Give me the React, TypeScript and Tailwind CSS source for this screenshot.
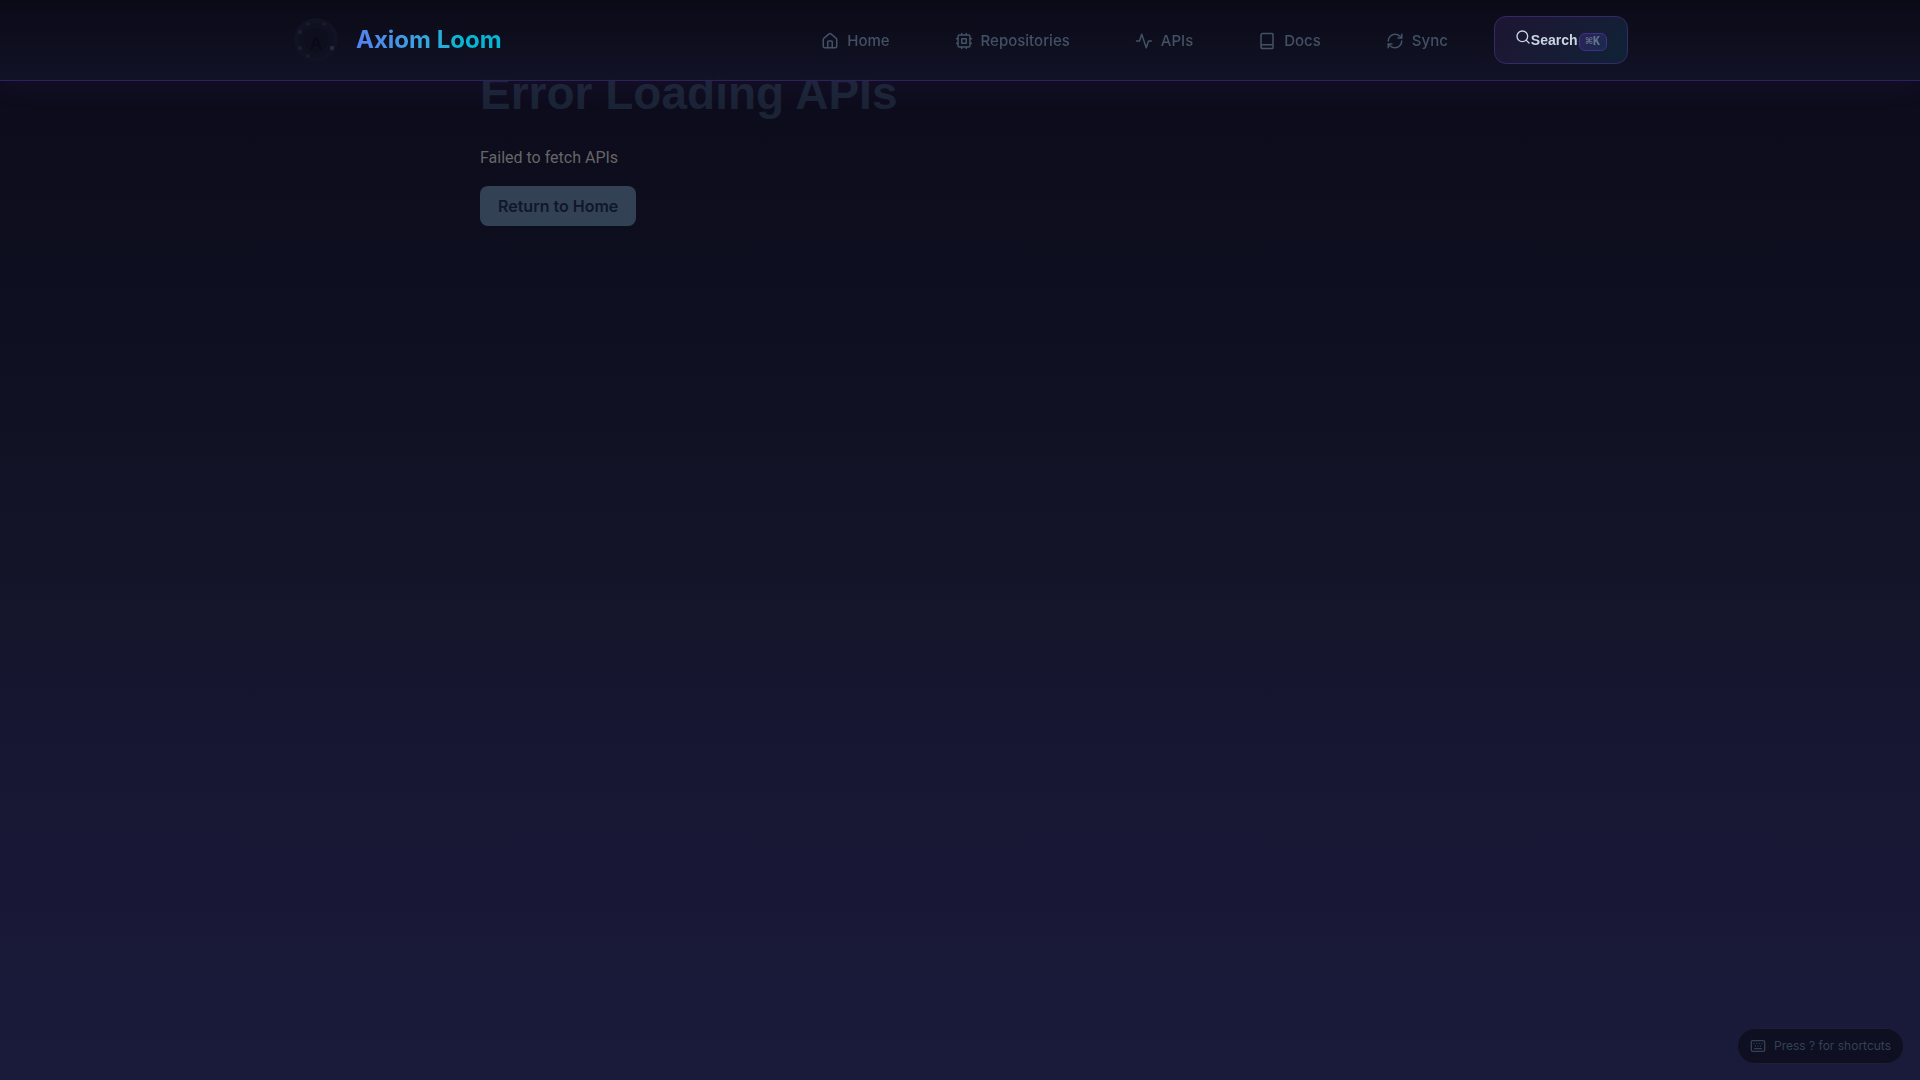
import React from "react";
import { Book, House, Keyboard, RefreshCw, Search } from "lucide-react";

function Cpu({ size }: { size: number }) {
  return (
    <svg width={size} height={size} viewBox="0 0 24 24" fill="none" stroke="currentColor" strokeWidth="2" strokeLinecap="round" strokeLinejoin="round" aria-hidden="true">
      <rect x="4" y="4" width="16" height="16" rx="2" />
      <rect x="9" y="9" width="6" height="6" />
      <path d="M15 2v2M15 20v2M2 15h2M2 9h2M20 15h2M20 9h2M9 2v2M9 20v2" />
    </svg>
  );
}

function Activity({ size }: { size: number }) {
  return (
    <svg width={size} height={size} viewBox="0 0 24 24" fill="none" stroke="currentColor" strokeWidth="2" strokeLinecap="round" strokeLinejoin="round" aria-hidden="true">
      <path d="M22 12h-4l-3 9L9 3l-3 9H2" />
    </svg>
  );
}

const links = [
  { label: "Home", Icon: House },
  { label: "Repositories", Icon: Cpu },
  { label: "APIs", Icon: Activity },
  { label: "Docs", Icon: Book },
  { label: "Sync", Icon: RefreshCw },
];

function Logo() {
  return (
    <svg viewBox="0 0 48 48" className="size-12" aria-hidden="true">
      <circle cx="24" cy="24" r="22" fill="#111223" />
      <circle cx="24" cy="24" r="17" fill="#0f1020" />
      <circle cx="24" cy="24" r="12" fill="#0e0f1e" />
      <text x="24" y="33" textAnchor="middle" fontFamily="Liberation Sans" fontWeight="bold" fontSize="17" fill="#090a16">
        A
      </text>
      <g fill="#162030">
        <circle cx="16" cy="8" r="1.8" />
        <circle cx="32" cy="8" r="1.8" />
        <circle cx="8" cy="16" r="2.2" />
        <circle cx="8" cy="32" r="2.2" />
        <circle cx="16" cy="40" r="1.8" />
      </g>
      <circle cx="40" cy="32" r="2.2" fill="#223142" />
    </svg>
  );
}

export default function App() {
  return (
    <div className="min-h-screen bg-linear-[180deg,#0d0b1a_0%,#0d0e1f_25%,#131427_50%,#171632_68%,#1a1a3b_100%] font-['Inter',sans-serif]">
      <header className="fixed inset-x-0 top-0 z-10 border-b border-[#2f2060] bg-linear-to-b from-[#0a0a17] to-[#121327]/95 shadow-[0_4px_32px_rgba(139,92,246,0.07)]">
        <div className="mx-auto flex h-20 max-w-[1400px] items-center justify-between px-8">
          <a href="#home" className="flex items-center gap-4">
            <Logo />
            <span className="bg-linear-to-r from-[#5580f0] to-[#06b6d4] to-70% bg-clip-text text-2xl font-bold text-transparent">
              Axiom Loom
            </span>
          </a>
          <nav className="flex items-center gap-[30px]">
            <ul className="flex items-center gap-[33px] pt-0.5">
              {links.map(({ label, Icon }) => (
                <li key={label}>
                  <a href={`#${label.toLowerCase()}`} className="flex items-center gap-2 px-4 py-2 text-[15px] font-medium text-[#435165]">
                    <Icon size={18} />
                    {label}
                  </a>
                </li>
              ))}
            </ul>
            <button className="h-12 rounded-xl border border-[#37286c] bg-linear-135 from-[#1d1533] to-[#0e2236] px-5 font-['Liberation_Sans',sans-serif] text-sm font-bold whitespace-nowrap text-[#cbd5e1]">
              <Search size={16} className="inline align-baseline" />
              Search
              <kbd className="ml-px inline-block rounded-md border border-[#40308a] bg-linear-135 from-[#2a2358] to-[#182a4c] px-1.5 font-['Liberation_Mono',monospace] text-xs font-bold text-[#64748b]">
                ⌘K
              </kbd>
            </button>
          </nav>
        </div>
      </header>
      <main className="mx-auto max-w-[960px] pt-16">
        <h1 className="font-['Liberation_Sans',sans-serif] text-[46px] leading-[58px] font-bold text-[#1b2435]">Error Loading APIs</h1>
        <p className="mt-6 font-['Roboto',sans-serif] text-base text-[#666666]">Failed to fetch APIs</p>
        <button className="mt-4 h-10 rounded-lg bg-[#334155] px-[18px] text-base font-semibold text-[#0f172a]">
          Return to Home
        </button>
      </main>
      <button className="fixed right-4 bottom-4 flex h-9 items-center gap-2 rounded-full border border-[#1e1e34] bg-[#0f0f22] px-3 text-xs text-[#334155]">
        <Keyboard size={16} />
        Press ? for shortcuts
      </button>
    </div>
  );
}
